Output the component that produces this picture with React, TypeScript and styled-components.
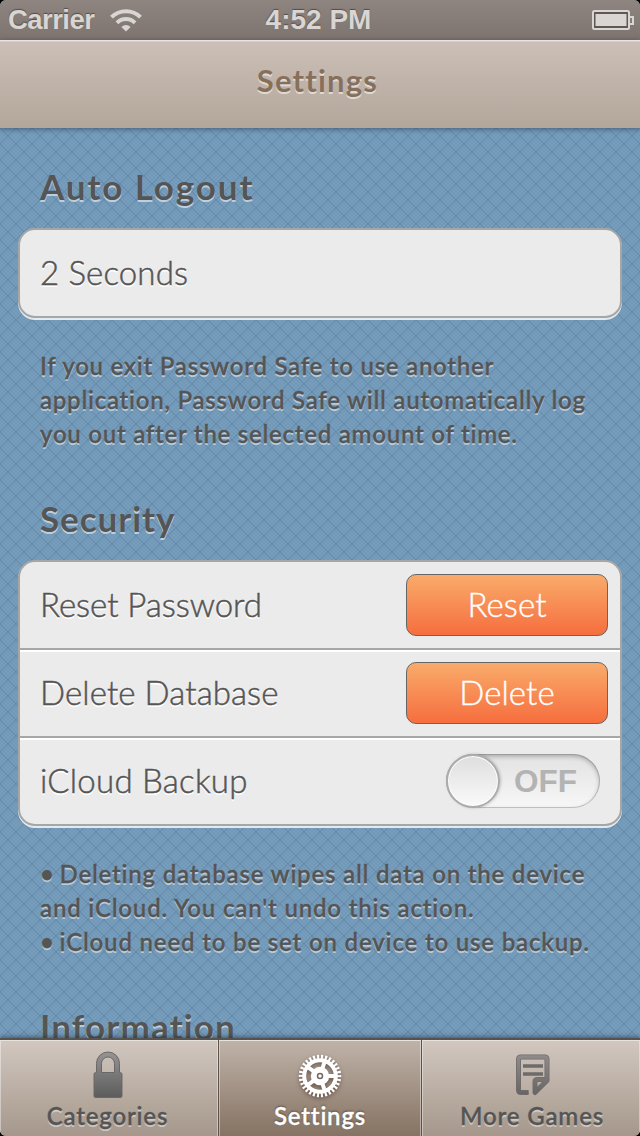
import React from "react";
import styled, { createGlobalStyle } from "styled-components";

const Global = createGlobalStyle`
  * { box-sizing: border-box; }
  html, body { margin: 0; padding: 0; background: #000; }
  body { font-family: Lato, "Open Sans", sans-serif; }
`;

const Screen = styled.div`
  width: 640px;
  height: 1136px;
  display: flex;
  flex-direction: column;
  overflow: hidden;
  border-radius: 6px;
  background-color: #7a9fbf;
  background-image:
    linear-gradient(45deg, transparent 45%, rgba(50, 85, 120, 0.18) 50%, transparent 55%),
    linear-gradient(-45deg, transparent 45%, rgba(50, 85, 120, 0.18) 50%, transparent 55%),
    repeating-linear-gradient(45deg, rgba(60, 95, 125, 0.08) 0 1px, transparent 1px 2.828px),
    repeating-linear-gradient(-45deg, rgba(60, 95, 125, 0.08) 0 1px, transparent 1px 2.828px);
  background-size: 16px 16px;
`;

const StatusBar = styled.header`
  height: 40px;
  flex: none;
  display: grid;
  grid-template-columns: 1fr auto 1fr;
  align-items: center;
  padding: 0 6px 0 8px;
  background: linear-gradient(#8e8480, #7e746f);
  color: #d9d5d2;
  font: bold 27.5px/40px "Liberation Sans", Arial, sans-serif;
  text-shadow: 0 -1px 1px rgba(50, 40, 35, 0.6);
`;

const Carrier = styled.div`
  display: flex;
  align-items: center;
  gap: 16px;
`;

const Clock = styled.time`
  padding-right: 5px;
  font-size: 28px;
  white-space: nowrap;
`;

const BatterySlot = styled.div`
  display: flex;
  justify-content: flex-end;
`;

const NavBar = styled.div`
  height: 88px;
  flex: none;
  position: relative;
  z-index: 1;
  border-top: 1px solid #e9e4e0;
  background: linear-gradient(#cbbfb7, #b3a79b);
  box-shadow: inset 0 1px 0 #d6cbc5, 0 1px 5px rgba(20, 40, 60, 0.55);
  text-align: center;
  padding-right: 5px;
`;

const Text = styled.span<{ $track?: number }>`
  letter-spacing: ${(p) => p.$track ?? 0}px;
  white-space: nowrap;
`;

const NavTitle = styled.h1`
  margin: 0;
  font-size: 31px;
  line-height: 79px;
  font-weight: 700;
  color: #87705b;
  text-shadow: 0 2px 0 rgba(255, 255, 255, 0.55);
`;

const Content = styled.main`
  flex: 1;
  min-height: 0;
  overflow: hidden;
  padding: 0 18px;
`;

const Heading = styled.h2`
  margin: 0;
  height: 100px;
  padding: 38px 0 0 22px;
  font-size: 35px;
  line-height: 40px;
  font-weight: 700;
  color: #555;
  text-shadow: 0 2px 0 rgba(255, 255, 255, 0.55);
`;

const Card = styled.section`
  border: 2px solid #a6a6a6;
  border-radius: 17px;
  background: #ebebeb;
  box-shadow: 0 2px 0 rgba(255, 255, 255, 0.8);
  overflow: hidden;
`;

const Row = styled.div`
  height: 86px;
  display: flex;
  align-items: center;
  justify-content: space-between;
  padding: 0 12px 0 20px;
  font-size: 33px;
  line-height: 84px;
  font-weight: 300;
  color: #555;
  text-shadow: 0 2px 0 #fff;

  > span {
    margin-top: -2px;
    -webkit-text-stroke: 0.5px #555;
  }

  & + & {
    height: 88px;
    border-top: 2px solid #a6a6a6;
    box-shadow: inset 0 2px 0 #fff;
  }
`;

const Button = styled.button`
  width: 202px;
  height: 62px;
  padding: 0 0 2px;
  border: 1px solid #666;
  border-radius: 10px;
  background: linear-gradient(#f9ab6b, #f66e3e);
  color: #fff;
  font: 300 33px/58px Lato, sans-serif;
  -webkit-text-stroke: 0.4px #fff;
`;

const Switch = styled.div`
  width: 154px;
  height: 54px;
  margin-right: 8px;
  border-radius: 27px;
  display: flex;
  align-items: center;
  background: linear-gradient(#e2e2e2, #f7f7f7);
  box-shadow: inset 0 2px 5px rgba(0, 0, 0, 0.3), inset 0 0 0 1px #c8c8c8;
  font: bold 31.5px/54px "Liberation Sans", Arial, sans-serif;
  color: #b3b3b3;
  text-shadow: none;
`;

const Knob = styled.span`
  width: 54px;
  height: 54px;
  flex: none;
  margin-right: 14px;
  border-radius: 50%;
  border: 2px solid #acacac;
  background: linear-gradient(#dedede, #fafafa);
  box-shadow: inset 0 0 0 1px #fff, 1px 0 3px rgba(0, 0, 0, 0.2);
`;

const Note = styled.p`
  margin: 0;
  padding: 31px 0 9px 22px;
  font-size: 24px;
  line-height: 34px;
  font-weight: 600;
  color: #555;
  text-shadow: 0 2px 0 rgba(255, 255, 255, 0.5);
  -webkit-text-stroke: 0.3px #555;
  display: flex;
  flex-direction: column;
`;

const Bullet = styled.span`
  margin-right: -2px;
`;

const TabBar = styled.nav`
  height: 98px;
  flex: none;
  margin-top: -2px;
  position: relative;
  display: grid;
  grid-template-columns: 218px 204px 218px;
  border-top: 2px solid #56524f;
  box-shadow: 0 -1px 5px rgba(20, 40, 60, 0.6);
`;

const Tab = styled.div<{ $active?: boolean; $shift?: number }>`
  display: flex;
  flex-direction: column;
  align-items: center;
  padding-top: 10px;
  padding-right: ${(p) => p.$shift ?? 0}px;
  font-size: 24px;
  line-height: 32px;
  font-weight: 600;
  color: ${(p) => (p.$active ? "#fff" : "#555")};
  -webkit-text-stroke: 0.3px currentColor;
  text-shadow: ${(p) => (p.$active ? "0 -1px 2px rgba(60,45,35,.7)" : "0 2px 0 rgba(255,255,255,.45)")};
  background: ${(p) => (p.$active ? "linear-gradient(#c0b3a9, #857363)" : "linear-gradient(#d2c8c0, #a5978b)")};
  border: solid #5b524b;
  border-width: ${(p) => (p.$active ? "0 1px" : "0")};
  box-shadow: inset 0 1px 0 #e8e2dd, inset 1px 0 0 rgba(255, 255, 255, 0.4), inset -1px 0 0 rgba(255, 255, 255, 0.4);

  &:last-child { padding-left: 2px; }
  svg { display: block; margin-bottom: 2px; overflow: visible; }
`;

const GearDrawing = styled.svg`
  filter: drop-shadow(0 2px 2px rgba(60, 40, 30, 0.6));
`;

const Wifi = () => (
  <svg width="32" height="24" viewBox="0 0 32 24" fill="none" stroke="#d9d5d2" strokeWidth="4">
    <path d="M1.5 9.2a20.500 20.500 0 0 1 29 0" />
    <path d="M7 14.800a12.700 12.700 0 0 1 18 0" />
    <path d="M16 23.500l-4.600-4.600a6.500 6.500 0 0 1 9.200 0z" fill="#d9d5d2" stroke="none" />
  </svg>
);

const Battery = () => (
  <svg width="42" height="20" viewBox="0 0 42 20">
    <rect x="1" y="1" width="36" height="18" rx="1.500" fill="#5f5753" stroke="#d9d5d2" strokeWidth="2" />
    <rect x="3.500" y="4" width="31" height="12" fill="#d9d5d2" />
    <path d="M38 7h3v7h-3" fill="none" stroke="#d9d5d2" strokeWidth="2" />
  </svg>
);

const Lock = () => (
  <svg width="30" height="48" viewBox="0 0 30 48">
    <defs>
      <linearGradient id="lock" x1="0" y1="0" x2="0" y2="1">
        <stop offset="0" stopColor="#969494" />
        <stop offset="1" stopColor="#5c5c5c" />
      </linearGradient>
    </defs>
    <path
      d="M1 24Q1 22.500 3.500 22.500V13.500a11.500 11.500 0 0 1 23 0v9Q29 22.500 29 24V46Q29 47.500 27.500 47.500h-25Q1 47.500 1 46zM8.500 22.500h13V13.500a6.500 6.500 0 0 0-13 0z"
      fill="url(#lock)" stroke="#6c6866" strokeWidth="1" fillRule="evenodd"
    />
  </svg>
);

const Gear = () => (
  <GearDrawing width="44" height="48" viewBox="-22 -26 44 48">
    <g fill="none" stroke="#fff">
      <circle r="19" strokeWidth="4.500" pathLength="60" strokeDasharray="1.050 0.950" strokeDashoffset=".5" />
      <circle r="15.800" strokeWidth="4" />
      {[0, 72, 144, 216, 288].map((a) => (
        <path key={a} d="M6 0H15" strokeWidth="4" transform={`rotate(${a})`} />
      ))}
      <circle r="6" strokeWidth="6.500" />
    </g>
    <circle r="2.500" fill="#fff" stroke="#75695f" strokeWidth="1.500" />
  </GearDrawing>
);

const Page = () => (
  <svg width="34" height="48" viewBox="0 0 34 48">
    <defs>
      <linearGradient id="page" x1="0" y1="0" x2="0" y2="48" gradientUnits="userSpaceOnUse">
        <stop offset="0" stopColor="#959191" />
        <stop offset="1" stopColor="#646260" />
      </linearGradient>
    </defs>
    <g fill="none" stroke="#6f6b69" strokeWidth="5" strokeLinejoin="round">
      <path d="M13.500 42.500H6Q3.500 42.500 3.500 40V9.500Q3.500 7 6 7H29.500Q32 7 32 9.500V30.500L20 42.500V32Q20 29.500 22.500 29.500H32" />
      <path d="M8 16h20M8 24h20" strokeWidth="3.600" />
    </g>
    <g fill="none" stroke="url(#page)" strokeWidth="3.500" strokeLinejoin="round">
      <path d="M13.500 42.500H6Q3.500 42.500 3.500 40V9.500Q3.500 7 6 7H29.500Q32 7 32 9.500V30.500L20 42.500V32Q20 29.500 22.500 29.500H32" />
    </g>
  </svg>
);

export default function App() {
  return (
    <>
      <Global />
      <Screen>
        <StatusBar>
          <Carrier>
            <Text $track={-0.55}>Carrier</Text>
            <Wifi />
          </Carrier>
          <Clock>4:52 PM</Clock>
          <BatterySlot>
            <Battery />
          </BatterySlot>
        </StatusBar>
        <NavBar>
          <NavTitle><Text $track={1.2}>Settings</Text></NavTitle>
        </NavBar>
        <Content>
          <Heading><Text $track={1.9}>Auto Logout</Text></Heading>
          <Card>
            <Row><Text $track={0.15}>2 Seconds</Text></Row>
          </Card>
          <Note>
            <Text $track={0.75}>If you exit Password Safe to use another</Text>
            <Text $track={0.75}>application, Password Safe will automatically log</Text>
            <Text $track={0.75}>you out after the selected amount of time.</Text>
          </Note>
          <Heading><Text $track={0.95}>Security</Text></Heading>
          <Card>
            <Row>
              <Text $track={-0.05}>Reset Password</Text>
              <Button><Text $track={0.1}>Reset</Text></Button>
            </Row>
            <Row>
              <Text $track={0.1}>Delete Database</Text>
              <Button><Text $track={0.1}>Delete</Text></Button>
            </Row>
            <Row>
              <Text $track={0.25}>iCloud Backup</Text>
              <Switch><Knob /><Text>OFF</Text></Switch>
            </Row>
          </Card>
          <Note>
            <Text $track={0.8}><Bullet>•</Bullet> Deleting database wipes all data on the device</Text>
            <Text $track={0.83}>and iCloud. You can't undo this action.</Text>
            <Text $track={0.83}><Bullet>•</Bullet> iCloud need to be set on device to use backup.</Text>
          </Note>
          <Heading><Text $track={1.15}>Information</Text></Heading>
        </Content>
        <TabBar>
          <Tab $shift={3}><Lock /><Text $track={0.8}>Categories</Text></Tab>
          <Tab $active><Gear /><Text $track={0.8}>Settings</Text></Tab>
          <Tab><Page /><Text $track={0.85}>More Games</Text></Tab>
        </TabBar>
      </Screen>
    </>
  );
}
